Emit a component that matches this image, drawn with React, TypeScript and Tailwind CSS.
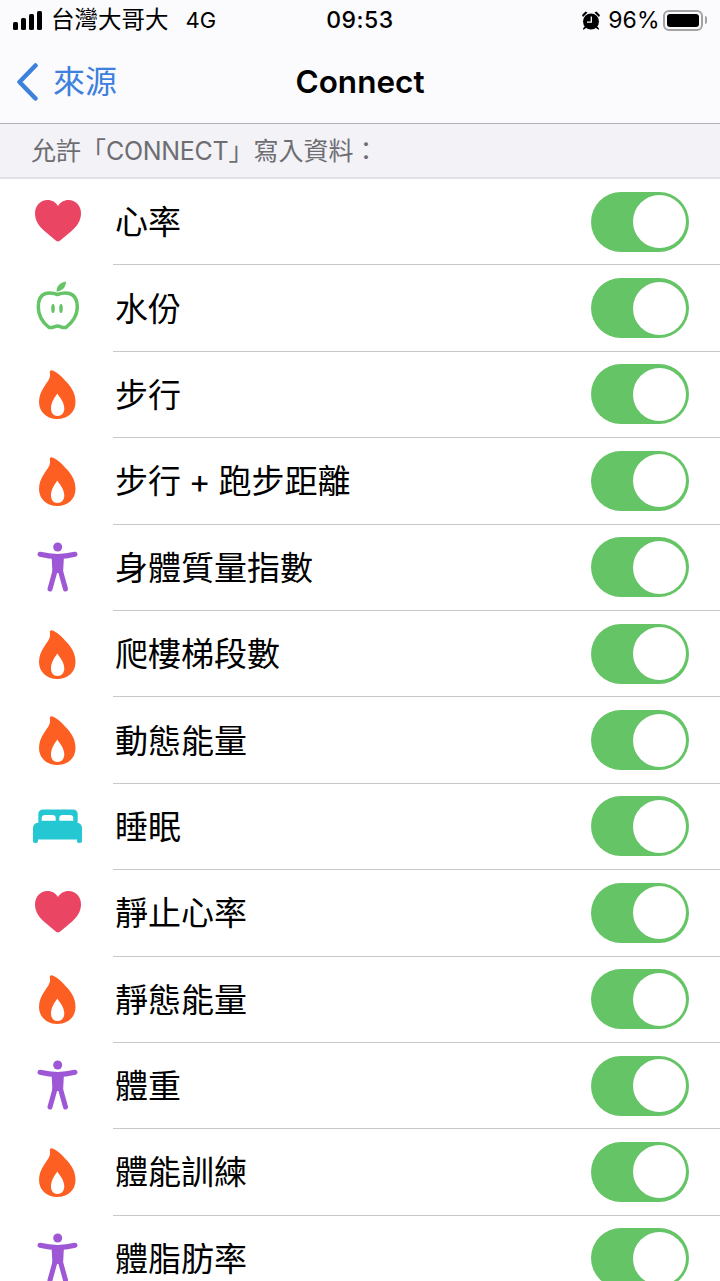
const HeartIcon = () => (
  <svg className="mb-[3px]" width="46" height="42" viewBox="0 0 46 42">
    <path fill="#ea4563" d="M23 41.5C21 41.5 17 37 10 31.5 4 26.5 0 20.5 0 13.5 0 5.500 5.500 0 12.500 0 17 0 20.800 2.300 23 6 25.200 2.300 29 0 33.500 0 40.500 0 46 5.500 46 13.500 46 20.500 42 26.500 36 31.500 29 37 25 41.500 23 41.500Z" />
  </svg>
);

const AppleIcon = () => (
  <svg className="mb-[6px] mr-[2px]" width="44" height="50" viewBox="0 0 44 50">
    <path fill="none" stroke="#65c466" strokeWidth="3.500" d="M22.500 13.500C18.500 12 14.500 11.500 10.500 12.500 5.500 14 3.300 19 3.300 26 3.300 35 8.500 42 13.500 46 16.500 48 19.500 45 22.500 45 25.500 45 28.500 48 31.500 46 36.500 42 42.300 35 42.300 26 42.300 19 39.500 14 34.500 12.500 30.500 11.500 26.500 12 22.500 13.500Z" />
    <path fill="#65c466" d="M21.500 10.500C21.500 5 25 1.500 31 .5 31 6 27.500 10 21.500 10.500Z" />
    <ellipse cx="18" cy="27.500" rx="1.800" ry="4.500" fill="#65c466" />
    <ellipse cx="26" cy="27.500" rx="1.800" ry="4.500" fill="#65c466" />
  </svg>
);

const FlameIcon = () => (
  <svg width="37" height="49" viewBox="0 0 37 49">
    <path fill="#fd5f22" d="M12.500 .3C11 .3 10.500 1.500 11 4 11.500 9 8 12 5 17 2 21.500 0 26 0 32 0 42 8 49 18 49 29 49 36.500 42 36.500 32 36.500 24 33 18 28 12.500 23 7 17 1 12.500 .3Z" />
    <path fill="#fff" d="M18.300 23.500C16 27 12 32 12 38.500 12 43 14.500 46 18.500 46 22.500 46 25.300 43 25.300 38.500 25.300 32 20.500 27 18.300 23.500Z" />
  </svg>
);

const BodyIcon = () => (
  <svg width="41" height="52" viewBox="0 0 41 52">
    <circle cx="20.700" cy="5" r="4.500" fill="#9e58d6" />
    <path fill="#9e58d6" d="M14.500 14H27L26 31H15.500Z" />
    <path fill="none" stroke="#9e58d6" strokeWidth="5" strokeLinecap="round" d="M3 12.300C10 14 15 14.500 20.700 14.500 26 14.500 31 14 38 12.300M13 47 18 29M28.500 47 23.500 29" />
  </svg>
);

const BedIcon = () => (
  <svg width="52" height="35" viewBox="0 0 52 35">
    <rect x="6.300" y="0.500" width="39.400" height="16" rx="4.500" fill="#25c8d2" />
    <path fill="#fff" d="M9.700 11.700V9C9.700 7 11 6 13 6H20.500C22.500 6 23.700 7 23.700 9V11.700ZM27.300 11.700V9C27.300 7 28.500 6 30.500 6H38C40 6 41.300 7 41.300 9V11.700Z" />
    <rect x="1" y="13.500" width="49" height="17" rx="5.500" fill="#25c8d2" />
    <rect x="1" y="22" width="5" height="12" rx="2" fill="#25c8d2" />
    <rect x="45" y="22" width="5" height="12" rx="2" fill="#25c8d2" />
  </svg>
);

const AlarmIcon = () => (
  <svg width="18" height="19" viewBox="0 0 18 19">
    <circle cx="9" cy="10.500" r="8" fill="#000" />
    <path fill="#000" d="M0 4 3.500 .5 5.500 1.500 1 6ZM18 4 14.500 .5 12.500 1.500 17 6ZM2.500 15.500.8 18l.8.8 3-2.300ZM15.500 15.500 17.200 18l-.8.8-3-2.300Z" />
    <path fill="none" stroke="#fff" strokeWidth="1.300" d="M9.300 5.500V11.200H5" />
  </svg>
);

const rows = [
  { icon: HeartIcon, label: '心率' },
  { icon: AppleIcon, label: '水份' },
  { icon: FlameIcon, label: '步行' },
  { icon: FlameIcon, label: '步行 + 跑步距離' },
  { icon: BodyIcon, label: '身體質量指數' },
  { icon: FlameIcon, label: '爬樓梯段數' },
  { icon: FlameIcon, label: '動態能量' },
  { icon: BedIcon, label: '睡眠' },
  { icon: HeartIcon, label: '靜止心率' },
  { icon: FlameIcon, label: '靜態能量' },
  { icon: BodyIcon, label: '體重' },
  { icon: FlameIcon, label: '體能訓練' },
  { icon: BodyIcon, label: '體脂肪率' },
];

function Toggle() {
  return (
    <div className="flex h-[60px] w-[98px] shrink-0 items-center justify-end rounded-full bg-[#65c466] pr-[3px]">
      <div className="h-[53px] w-[53px] rounded-full bg-white" />
    </div>
  );
}

function App() {
  return (
    <div className="h-[1281px] w-[720px] overflow-hidden bg-white font-['Inter','Noto_Sans_CJK_TC',sans-serif] text-black">
      <header className="h-[124px] border-b border-[#b2b2b6] bg-[#fbfbfd]">
        <div className="grid h-[40px] grid-cols-3 items-center px-[13px]">
          <div className="flex items-center">
            <div className="flex h-[19px] items-end gap-[3px]">
              <span className="h-[8px] w-[5px] rounded-[1.5px] bg-black" />
              <span className="h-[12px] w-[5px] rounded-[1.5px] bg-black" />
              <span className="h-[16px] w-[5px] rounded-[1.5px] bg-black" />
              <span className="h-[19px] w-[5px] rounded-[1.5px] bg-black" />
            </div>
            <span className="ml-[9px] whitespace-nowrap text-[23.5px] leading-none">台灣大哥大</span>
            <span className="ml-[17px] text-[22px] leading-none">4G</span>
          </div>
          <div className="text-center text-[23px] font-medium leading-none tracking-[0.5px]">09:53</div>
          <div className="flex items-center justify-end">
            <AlarmIcon />
            <span className="ml-[8px] text-[23px] leading-none">96%</span>
            <div className="ml-[4px] flex h-[21px] w-[40px] items-center rounded-[6px] border-2 border-[#a3a3a3] p-[2px]">
              <div className="h-full w-[32px] rounded-[3px] bg-black" />
            </div>
            <div className="ml-[2px] h-[8px] w-[1.5px] rounded-r-sm bg-[#a3a3a3]" />
          </div>
        </div>
        <div className="grid h-[83px] grid-cols-[1fr_auto_1fr] items-center">
          <div className="flex items-center pl-[16px] text-[#3d80dd]">
            <svg width="22" height="38" viewBox="0 0 22 38">
              <path d="M19.500 2.500 3.500 19l16 16.500" fill="none" stroke="currentColor" strokeWidth="4.500" strokeLinecap="round" strokeLinejoin="round" />
            </svg>
            <span className="ml-[15px] text-[32px] leading-none">來源</span>
          </div>
          <h1 className="text-[31.5px] font-semibold leading-none">Connect</h1>
          <div />
        </div>
      </header>

      <div className="flex h-[55px] items-center border-b-2 border-[#e2e2e4] bg-[#f2f2f7] pl-[31px] pt-[2px] text-[25px] text-[#6d6d72]">
        <span>
          允許「<span className="tracking-[-0.3px]">CONNECT</span>」寫入資料：
        </span>
      </div>

      <ul>
        {rows.map((row, i) => {
          const Icon = row.icon;
          return (
            <li key={i} className="flex h-[86.4px]">
              <div className="flex w-[113px] shrink-0 items-center justify-center pl-[2px]">
                <Icon />
              </div>
              <div className="flex flex-1 items-center justify-between border-b border-[#c8c8ca] pl-[2px] pr-[31px]">
                <span className="mt-[2px] text-[33px] leading-none [word-spacing:-1.5px]">{row.label}</span>
                <Toggle />
              </div>
            </li>
          );
        })}
      </ul>
    </div>
  );
}

export default App;
